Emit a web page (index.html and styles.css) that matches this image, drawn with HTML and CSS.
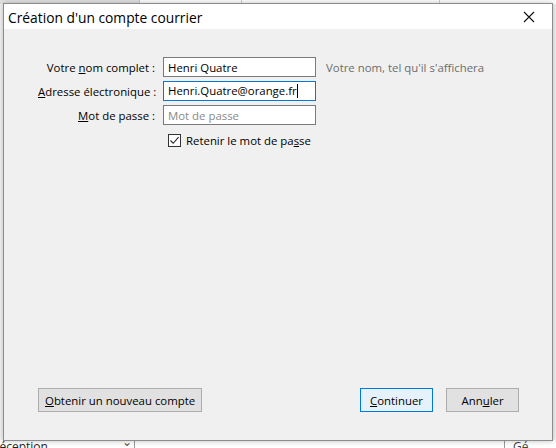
FILE: index.html
```html
<!DOCTYPE html>
<html lang="fr">
<head>
  <meta charset="UTF-8" />
  <title>Création d'un compte courrier</title>
  <link rel="stylesheet" href="styles.css">
</head>
<body>
  <div class="desktop">
    <div class="app-top">
      <span class="cell c1"></span>
      <span class="cell c2"></span>
      <span class="cell c3"></span>
    </div>
    <div class="app-bottom">
      <span class="field">Réception</span>
      <span class="arrow">⌄</span>
      <span class="right-box">Gé</span>
    </div>

    <div class="dialog">
      <div class="titlebar">
        <span class="title">Création d'un compte courrier</span>
        <span class="close">
          <svg width="12" height="12" viewBox="0 0 12 12"><path d="M1 1L11 11M11 1L1 11" stroke="#111" stroke-width="1.1"/></svg>
        </span>
      </div>

      <div class="content">
        <div class="form">
          <label class="lbl">Votre <u>n</u>om complet :</label>
          <div class="field-row">
            <input class="txt" type="text" value="Henri Quatre">
            <span class="hint">Votre nom, tel qu'il s'affichera</span>
          </div>

          <label class="lbl"><u>A</u>dresse électronique :</label>
          <div class="field-row">
            <div class="txt focused">Henri.Quatre@orange.fr<span class="caret"></span></div>
          </div>

          <label class="lbl"><u>M</u>ot de passe :</label>
          <div class="field-row">
            <input class="txt" type="password" placeholder="Mot de passe">
          </div>

          <span></span>
          <div class="check-row">
            <span class="box">
              <svg width="11" height="11" viewBox="0 0 11 11"><path d="M1.5 5.5L4.2 8.3L9.6 2.2" fill="none" stroke="#222" stroke-width="1.1"/></svg>
            </span>
            <span>Retenir le mot de pa<u>s</u>se</span>
          </div>
        </div>

        <div class="footer">
          <button class="btn"><u>O</u>btenir un nouveau compte</button>
          <div class="spacer"></div>
          <button class="btn default"><u>C</u>ontinuer</button>
          <button class="btn">Ann<u>u</u>ler</button>
        </div>
      </div>
    </div>
  </div>
</body>
</html>
```

FILE: styles.css
```css
* {
  box-sizing: border-box;
}
body {
  margin: 0;
  font-family: "Open Sans", "Noto Sans", sans-serif;
  font-size: 11.4px;
  color: #000;
}
.desktop {
  position: relative;
  width: 556px;
  height: 448px;
  background: #f4f4f4;
  overflow: hidden;
}

/* bits of the main window showing around the dialog */
.app-top {
  display: flex;
  height: 4px;
  background: #fff;
  overflow: hidden;
}
.app-top .cell {
  border-right: 1px solid #cfcfcf;
  height: 4px;
}
.app-top .c1 {
  width: 140px;
  background: #e2e2e2;
}
.app-top .c2 {
  width: 102px;
}
.app-top .c3 {
  width: 198px;
}
.app-bottom {
  position: absolute;
  left: 0;
  bottom: 0;
  width: 556px;
  height: 8px;
  display: flex;
  background: #fff;
  font-size: 12px;
  line-height: 14px;
  overflow: hidden;
}
.app-bottom .field {
  width: 130px;
  margin-left: -8px;
  color: #222;
}
.app-bottom .arrow {
  width: 13px;
  border-right: 1px solid #9a9a9a;
  color: #555;
  line-height: 4px;
}
.app-bottom .right-box {
  margin-left: auto;
  width: 52px;
  border-left: 1px solid #9a9a9a;
  padding-left: 8px;
  color: #444;
}

.dialog {
  position: absolute;
  left: 3px;
  top: 3px;
  width: 550px;
  height: 438px;
  background: #f0f0f0;
  border: 1px solid #8c8c8c;
  box-shadow: 0 0 6px rgba(0, 0, 0, 0.25);
  display: flex;
  flex-direction: column;
}
.titlebar {
  height: 25px;
  background: #fff;
  display: flex;
  align-items: center;
  padding-left: 4px;
}
.title {
  font-size: 13.8px;
  color: #000;
  flex: 1;
  padding-top: 1px;
  white-space: nowrap;
}
.close {
  width: 46px;
  display: flex;
  justify-content: center;
  padding-top: 1px;
}
.content {
  flex: 1;
  display: flex;
  flex-direction: column;
  padding: 28px 33px 28px 34px;
}
.form {
  display: grid;
  grid-template-columns: 117px 1fr;
  column-gap: 8px;
  row-gap: 4px;
  align-items: center;
}
.lbl {
  text-align: right;
  white-space: nowrap;
}
.field-row {
  display: flex;
  align-items: center;
}
.txt {
  width: 153px;
  height: 20px;
  border: 1px solid #7a7a7a;
  background: #fff;
  font: inherit;
  padding: 0 4px;
  line-height: 18px;
  outline: none;
  white-space: nowrap;
}
.txt::placeholder {
  color: #8a8a8a;
}
.focused {
  border-color: #0078d7;
  display: flex;
  align-items: center;
}
.caret {
  width: 1px;
  height: 14px;
  background: #000;
}
.hint {
  margin-left: 10px;
  color: #6d6d6d;
  white-space: nowrap;
}
.check-row {
  display: flex;
  align-items: center;
  gap: 5px;
  margin-top: 4px;
  padding-left: 5px;
}
.box {
  width: 13px;
  height: 13px;
  border: 1px solid #333;
  background: #fff;
  display: flex;
  align-items: center;
  justify-content: center;
}
.footer {
  margin-top: auto;
  display: flex;
  align-items: center;
  gap: 13px;
}
.spacer {
  flex: 1;
}
.btn {
  height: 24px;
  min-width: 73px;
  padding: 0 6px;
  border: 1px solid #adadad;
  background: #e1e1e1;
  font: inherit;
  color: #000;
  white-space: nowrap;
}
.btn.default {
  border-color: #0078d7;
  background: #e5f1fb;
}
```
